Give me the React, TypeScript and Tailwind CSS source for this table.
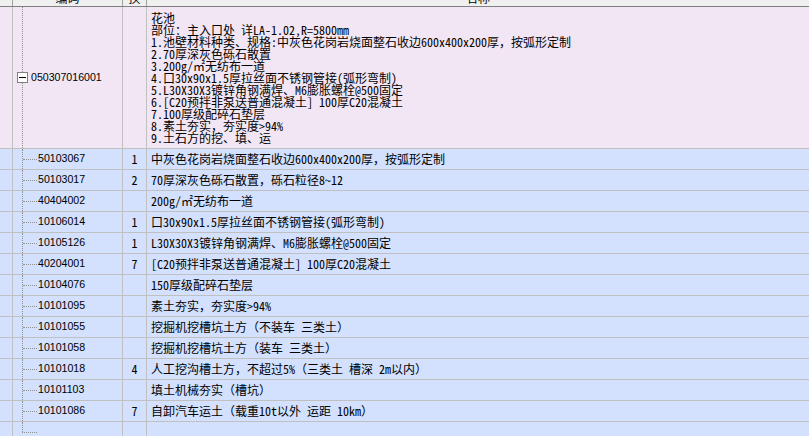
import React from 'react';

type Item = { code: string; qty: string; name: string };

const MONO = { fontFamily: '"Noto Sans Mono CJK SC", "Noto Sans CJK SC", monospace' };
const CODE = { fontFamily: '"Liberation Sans", Arial, sans-serif' };

const DESC_LINES = [
  '花池',
  '部位：主入口处 详LA-1.02,R=5800mm',
  '1.池壁材料种类、规格:中灰色花岗岩烧面整石收边600x400x200厚，按弧形定制',
  '2.70厚深灰色砾石散置',
  '3.200g/㎡无纺布一道',
  '4.口30x90x1.5厚拉丝面不锈钢管接(弧形弯制)',
  '5.L30X30X3镀锌角钢满焊、M6膨胀螺栓@500固定',
  '6.[C20预拌非泵送普通混凝土] 100厚C20混凝土',
  '7.100厚级配碎石垫层',
  '8.素土夯实，夯实度>94%',
  '9.土石方的挖、填、运',
];

const ITEMS: Item[] = [
  { code: '50103067', qty: '1', name: '中灰色花岗岩烧面整石收边600x400x200厚，按弧形定制' },
  { code: '50103017', qty: '2', name: '70厚深灰色砾石散置，砾石粒径8~12' },
  { code: '40404002', qty: '', name: '200g/㎡无纺布一道' },
  { code: '10106014', qty: '1', name: '口30x90x1.5厚拉丝面不锈钢管接(弧形弯制)' },
  { code: '10105126', qty: '1', name: 'L30X30X3镀锌角钢满焊、M6膨胀螺栓@500固定' },
  { code: '40204001', qty: '7', name: '[C20预拌非泵送普通混凝土] 100厚C20混凝土' },
  { code: '10104076', qty: '', name: '150厚级配碎石垫层' },
  { code: '10101095', qty: '', name: '素土夯实，夯实度>94%' },
  { code: '10101055', qty: '', name: '挖掘机挖槽坑土方（不装车 三类土）' },
  { code: '10101058', qty: '', name: '挖掘机挖槽坑土方（装车 三类土）' },
  { code: '10101018', qty: '4', name: '人工挖沟槽土方，不超过5%（三类土 槽深 2m以内）' },
  { code: '10101103', qty: '', name: '填土机械夯实（槽坑）' },
  { code: '10101086', qty: '7', name: '自卸汽车运土（载重10t以外 运距 10km）' },
];

function ChildRow({ item }: { item: Item }) {
  return (
    <div className="flex h-[21px] border-b border-[#c0c0c0] bg-[#d3e0fe]">
      <div className="w-[13px] shrink-0 border-r border-[#c0c0c0]" />
      <div className="w-[110px] shrink-0 border-r border-[#c0c0c0] flex items-center">
        <div className="ml-[9px] self-stretch border-l border-dotted border-[#909090] flex items-center">
          <div className="w-[14px] border-t border-dotted border-[#909090]" />
        </div>
        <span className="ml-[1px] text-[10.6px] text-black" style={CODE}>
          {item.code}
        </span>
      </div>
      <div className="w-[24px] shrink-0 border-r border-[#c0c0c0] flex items-center justify-center text-[12px] text-black" style={MONO}>
        {item.qty}
      </div>
      <div className="flex-1 flex items-center pl-[4px] text-[12px] leading-[12px] text-black whitespace-nowrap" style={MONO}>
        {item.name}
      </div>
    </div>
  );
}

export default function App() {
  return (
    <div className="w-[809px] h-[436px] overflow-hidden bg-white select-none">
      {/* header, scrolled so only its bottom shows */}
      <div className="flex h-[7px] overflow-hidden bg-[#f0f0f0] border-b border-[#808080]">
        <div className="w-[13px] shrink-0 border-r border-[#a0a0a0]" />
        <div className="w-[110px] shrink-0 border-r border-[#a0a0a0] flex justify-center">
          <span className="-mt-[8px] text-[12px] leading-[12px] text-black" style={MONO}>编码</span>
        </div>
        <div className="w-[24px] shrink-0 border-r border-[#a0a0a0] flex justify-center">
          <span className="-mt-[8px] text-[12px] leading-[12px] text-black" style={MONO}>换</span>
        </div>
        <div className="flex-1 flex justify-center">
          <span className="-mt-[8px] text-[12px] leading-[12px] text-black" style={MONO}>名称</span>
        </div>
      </div>

      {/* parent row */}
      <div className="flex h-[142px] border-b border-[#c0c0c0] bg-[#f2e6f4]">
        <div className="w-[13px] shrink-0 border-r border-[#c0c0c0]" />
        <div className="w-[110px] shrink-0 border-r border-[#c0c0c0] relative flex items-center">
          <div className="absolute left-[9px] top-0 bottom-0 border-l border-dotted border-[#909090]" />
          <div className="relative ml-[4px] w-[11px] h-[11px] border border-[#808080] bg-white flex items-center justify-center">
            <div className="w-[7px] h-[1px] bg-black" />
          </div>
          <span className="ml-[3px] text-[10.6px] text-black" style={CODE}>050307016001</span>
        </div>
        <div className="w-[24px] shrink-0 border-r border-[#c0c0c0]" />
        <div className="flex-1 pl-[4px] pt-[5px] text-[12px] leading-[12px] text-black whitespace-nowrap" style={MONO}>
          {DESC_LINES.map((l) => (
            <div key={l}>{l}</div>
          ))}
        </div>
      </div>

      {ITEMS.map((it) => (
        <ChildRow key={it.code} item={it} />
      ))}

      {/* trailing empty row */}
      <div className="flex h-[21px] bg-[#d3e0fe]">
        <div className="w-[13px] shrink-0 border-r border-[#c0c0c0]" />
        <div className="w-[110px] shrink-0 border-r border-[#c0c0c0] flex flex-col">
          <div className="ml-[9px] h-[10px] border-l border-dotted border-[#909090]" />
          <div className="ml-[9px] w-[15px] border-t border-dotted border-[#909090]" />
        </div>
        <div className="w-[24px] shrink-0 border-r border-[#c0c0c0]" />
        <div className="flex-1" />
      </div>
    </div>
  );
}
